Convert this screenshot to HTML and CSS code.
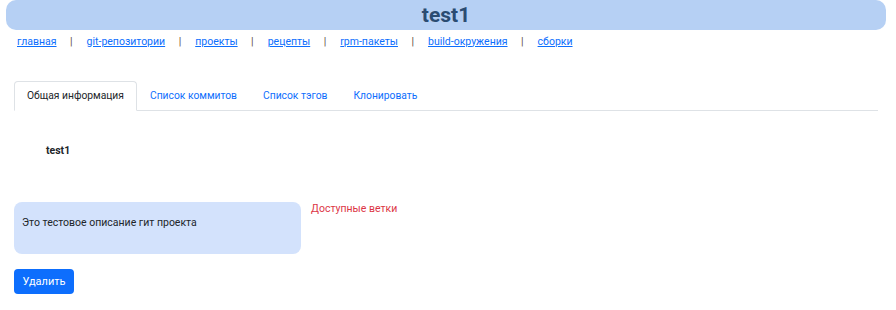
FILE: index.html
```html
<!DOCTYPE html>
<html lang="ru">
<head>
<meta charset="utf-8">
<title>test1</title>
<link rel="stylesheet" href="styles.css">
</head>
<body>
<header class="hdr"><h1 class="hdr-title">test1</h1></header>
<nav class="topnav">
  <a href="#">главная</a><span class="sep">|</span>
  <a href="#">git-репозитории</a><span class="sep">|</span>
  <a href="#">проекты</a><span class="sep">|</span>
  <a href="#">рецепты</a><span class="sep">|</span>
  <a href="#">rpm-пакеты</a><span class="sep">|</span>
  <a href="#">build-окружения</a><span class="sep">|</span>
  <a href="#">сборки</a>
</nav>
<main class="content">
  <ul class="tabs">
    <li class="tab active">Общая информация</li>
    <li class="tab">Список коммитов</li>
    <li class="tab">Список тэгов</li>
    <li class="tab">Клонировать</li>
  </ul>
  <div class="name">test1</div>
  <div class="row">
    <div class="desc">Это тестовое описание гит проекта</div>
    <div class="branches">Доступные ветки</div>
  </div>
  <button class="btn">Удалить</button>
</main>
</body>
</html>
```
FILE: styles.css
```css
html, body { margin: 0; padding: 0; background: #fff; }
body { font-family: Roboto, "Noto Sans", sans-serif; font-size: 10.5px; color: #212529; }
.hdr { margin: 0 10px 0 6px; height: 30px; background: #b6d0f4; border-radius: 10px; display: flex; align-items: center; justify-content: center; }
.hdr-title { margin: 0; font-size: 21px; font-weight: 700; color: #2b4c72; line-height: 30px; }
.topnav { display: flex; align-items: center; padding: 4px 0 0 17px; height: 14px; }
.topnav a { color: #0d6efd; text-decoration: underline; }
.sep { color: #5a4a40; margin: 0 14px 0 13.5px; }
.content { padding: 33px 18px 0 14px; }
.tabs { list-style: none; margin: 0; padding: 0; display: flex; border-bottom: 1px solid #dee2e6; font-size: 10.3px; }
.tab { padding: 0 12px; line-height: 28px; color: #0d6efd; border: 1px solid transparent; border-radius: 4px 4px 0 0; margin-bottom: -1px; }
.tab.active { color: #212529; border-color: #dee2e6 #dee2e6 #fff; background: #fff; }
.name { font-weight: 700; padding: 33px 0 0 32px; line-height: 14px; }
.row { display: flex; margin-top: 44px; gap: 10px; }
.desc { width: 279px; height: 38px; padding: 14px 0 0 8px; background: #d3e2fc; border-radius: 8px; line-height: 14px; }
.branches { color: #dc3545; line-height: 14px; }
.btn { margin-top: 15px; background: #0d6efd; color: #fff; border: 0; border-radius: 4px; font-family: Roboto, sans-serif; font-size: 11px; width: 60px; height: 25px; padding: 0; display: block; }
```
